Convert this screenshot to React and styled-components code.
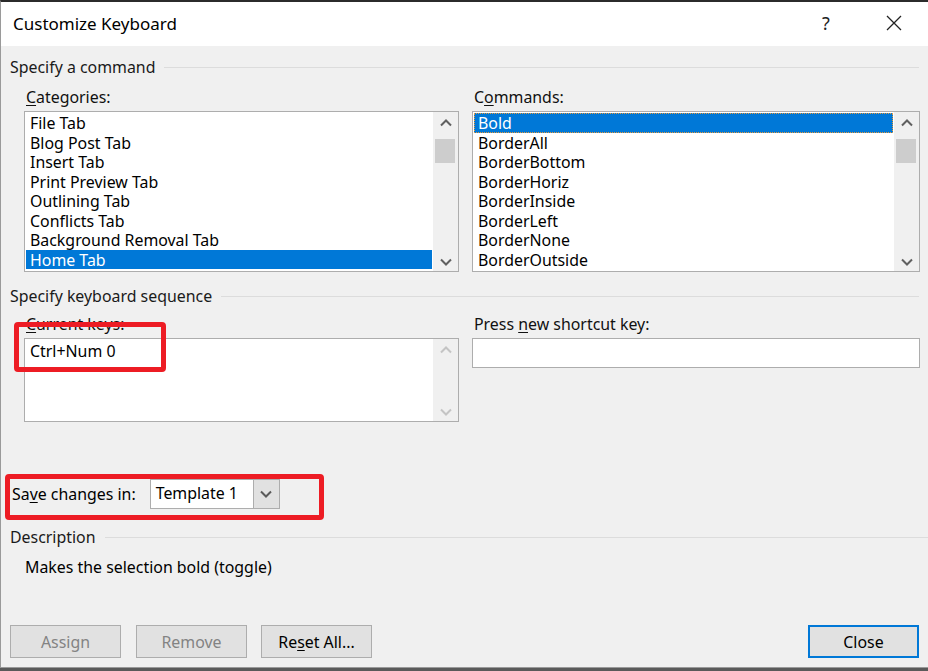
import React from "react";
import styled, { createGlobalStyle } from "styled-components";

const GlobalStyle = createGlobalStyle`
  html, body {
    margin: 0;
    padding: 0;
    background: #5a5a5a;
  }
  body {
    font-family: "Noto Sans", "Open Sans", sans-serif;
  }
`;

const categories = [
  "File Tab",
  "Blog Post Tab",
  "Insert Tab",
  "Print Preview Tab",
  "Outlining Tab",
  "Conflicts Tab",
  "Background Removal Tab",
  "Home Tab",
];

const commands = [
  "Bold",
  "BorderAll",
  "BorderBottom",
  "BorderHoriz",
  "BorderInside",
  "BorderLeft",
  "BorderNone",
  "BorderOutside",
];

const Window = styled.div`
  width: 928px;
  height: 668px;
  box-sizing: border-box;
  border-top: 2px solid #2b2b2b;
  border-left: 1px solid #9a9a9a;
  border-bottom: 1px solid #9a9a9a;
  background: #f0f0f0;
  display: flex;
  flex-direction: column;
  color: #000;
  font-size: 15.9px;
`;

const TitleBar = styled.div`
  height: 44px;
  flex: none;
  background: #fff;
  display: flex;
  align-items: center;
  padding-left: 12px;
  font-size: 17px;
  color: #000;
`;

const Title = styled.div`
  flex: 1;
  margin-top: -2px;
`;

const TitleButton = styled.div`
  width: 68px;
  height: 44px;
  display: flex;
  align-items: center;
  justify-content: center;
  font-size: 18px;
  color: #222;
  margin-top: -3px;
`;

const Body = styled.div`
  flex: 1;
  position: relative;
  padding: 11px 9px 0 9px;
  display: flex;
  flex-direction: column;
`;

const GroupHeader = styled.div`
  display: flex;
  align-items: center;
  height: 20px;
  color: #1a1a1a;
  margin-top: ${(p) => p.$top || 0}px;
  &::after {
    content: "";
    flex: 1;
    height: 1px;
    background: #dcdcdc;
    margin-left: 9px;
    margin-right: ${(p) => p.$lineEnd || 0}px;
  }
`;

const Columns = styled.div`
  display: grid;
  grid-template-columns: 435px 448px;
  column-gap: 13px;
  padding-left: 14px;
  margin-top: ${(p) => p.$top || 0}px;
`;

const Field = styled.div`
  position: relative;
  display: flex;
  flex-direction: column;
`;

const Label = styled.div`
  height: 20px;
  line-height: 20px;
  padding-left: 2px;
  margin-bottom: 4px;
  color: #111;
`;

const U = styled.span`
  text-decoration: underline;
  text-underline-offset: 2px;
`;

const ListBox = styled.div`
  height: ${(p) => p.$height}px;
  box-sizing: border-box;
  border: 1px solid #adadad;
  background: #fff;
  display: flex;
`;

const Items = styled.div`
  flex: 1;
  padding: ${(p) => p.$padTop || 1}px 1px 0 1px;
  overflow: hidden;
`;

const Item = styled.div`
  height: 19.5px;
  line-height: 19px;
  box-sizing: border-box;
  white-space: nowrap;
  background: ${(p) => (p.$selected ? "#0078d7" : "transparent")};
  color: ${(p) => (p.$selected ? "#fff" : "#000")};
  border: 1px dotted ${(p) => (p.$focus ? "#e59a3c" : "transparent")};
  padding-left: 3px;
`;

const ScrollBar = styled.div`
  width: 25px;
  flex: none;
  background: #f0f0f0;
  display: flex;
  flex-direction: column;
  align-items: center;
  justify-content: space-between;
  padding: 6px 0 4px;
  box-sizing: border-box;
  position: relative;
`;

const Thumb = styled.div`
  position: absolute;
  left: 2px;
  right: 3px;
  top: 27px;
  height: 24px;
  background: #cdcdcd;
`;

const TextBox = styled.div`
  height: 30px;
  box-sizing: border-box;
  border: 1px solid #adadad;
  background: #fff;
`;

const Chevron = ({ up, color = "#606060" }) => (
  <svg width="14" height="10" viewBox="0 0 14 10">
    <path
      d={up ? "M2 7.5 L7 2.5 L12 7.5" : "M2 2.5 L7 7.5 L12 2.5"}
      fill="none"
      stroke={color}
      strokeWidth="2"
    />
  </svg>
);

const RedBox = styled.div`
  position: absolute;
  border: 5px solid #ed1c24;
  border-radius: 4px;
  pointer-events: none;
  left: ${(p) => p.$left}px;
  top: ${(p) => p.$top}px;
  width: ${(p) => p.$width}px;
  height: ${(p) => p.$height}px;
  box-sizing: border-box;
`;

const SaveRow = styled.div`
  position: relative;
  display: flex;
  align-items: center;
  height: 30px;
  margin-top: 57px;
  gap: 14px;
  padding-left: 2px;
`;

const Combo = styled.div`
  width: 130px;
  height: 30px;
  box-sizing: border-box;
  border: 1px solid #adadad;
  background: #fff;
  display: flex;
  align-items: stretch;
`;

const ComboText = styled.div`
  flex: 1;
  padding-left: 5px;
  line-height: 27px;
`;

const ComboButton = styled.div`
  width: 25px;
  background: #e1e1e1;
  border-left: 1px solid #adadad;
  display: flex;
  align-items: center;
  justify-content: center;
`;

const DescText = styled.div`
  padding-left: 15px;
  margin-top: 10px;
  height: 20px;
  line-height: 20px;
`;

const ButtonRow = styled.div`
  display: flex;
  margin-top: auto;
  margin-bottom: 9px;
`;

const Button = styled.div`
  width: 111px;
  height: 33px;
  box-sizing: border-box;
  border: ${(p) => (p.$default ? "2px solid #0078d7" : "1px solid #adadad")};
  background: #e1e1e1;
  display: flex;
  align-items: center;
  justify-content: center;
  color: ${(p) => (p.$disabled ? "#838383" : "#000")};
  margin-right: ${(p) => p.$gap || 0}px;
  margin-left: ${(p) => (p.$push ? "auto" : "0")};
`;

export default function App() {
  return (
    <>
      <GlobalStyle />
      <Window>
        <TitleBar>
          <Title>Customize Keyboard</Title>
          <TitleButton>?</TitleButton>
          <TitleButton>
            <svg width="16" height="16" viewBox="0 0 16 16">
              <path d="M1 1 L15 15 M15 1 L1 15" stroke="#222" strokeWidth="1.3" />
            </svg>
          </TitleButton>
        </TitleBar>
        <Body>
          <GroupHeader>Specify a command</GroupHeader>
          <Columns $top={10}>
            <Field>
              <Label>
                <U>C</U>ategories:
              </Label>
              <ListBox $height={161}>
                <Items>
                  {categories.map((c, i) => (
                    <Item key={c} $selected={i === categories.length - 1}>
                      {c}
                    </Item>
                  ))}
                </Items>
                <ScrollBar>
                  <Chevron up />
                  <Thumb />
                  <Chevron />
                </ScrollBar>
              </ListBox>
            </Field>
            <Field>
              <Label>
                C<U>o</U>mmands:
              </Label>
              <ListBox $height={161}>
                <Items>
                  {commands.map((c, i) => (
                    <Item key={c} $selected={i === 0} $focus={i === 0}>
                      {c}
                    </Item>
                  ))}
                </Items>
                <ScrollBar>
                  <Chevron up />
                  <Thumb />
                  <Chevron />
                </ScrollBar>
              </ListBox>
            </Field>
          </Columns>
          <GroupHeader $top={14}>Specify keyboard sequence</GroupHeader>
          <Columns $top={8}>
            <Field>
              <Label>
                <U>C</U>urrent keys:
              </Label>
              <ListBox $height={84}>
                <Items $padTop={2}>
                  <Item>Ctrl+Num 0</Item>
                </Items>
                <ScrollBar>
                  <Chevron up color="#c4c4c4" />
                  <Chevron color="#c4c4c4" />
                </ScrollBar>
              </ListBox>
              <RedBox $left={-10} $top={8} $width={152} $height={50} />
            </Field>
            <Field>
              <Label>
                Press <U>n</U>ew shortcut key:
              </Label>
              <TextBox />
            </Field>
          </Columns>
          <SaveRow>
            <div>
              Sa<U>v</U>e changes in:
            </div>
            <Combo>
              <ComboText>Template 1</ComboText>
              <ComboButton>
                <Chevron color="#5a5a5a" />
              </ComboButton>
            </Combo>
            <RedBox $left={-5} $top={-5} $width={319} $height={46} />
          </SaveRow>
          <GroupHeader $top={18} $lineEnd={-9}>
            Description
          </GroupHeader>
          <DescText>Makes the selection bold (toggle)</DescText>
          <ButtonRow>
            <Button $disabled $gap={15}>
              Assign
            </Button>
            <Button $disabled $gap={14}>
              Remove
            </Button>
            <Button>
              Re<U>s</U>et All...
            </Button>
            <Button $default $push>
              Close
            </Button>
          </ButtonRow>
        </Body>
      </Window>
    </>
  );
}
